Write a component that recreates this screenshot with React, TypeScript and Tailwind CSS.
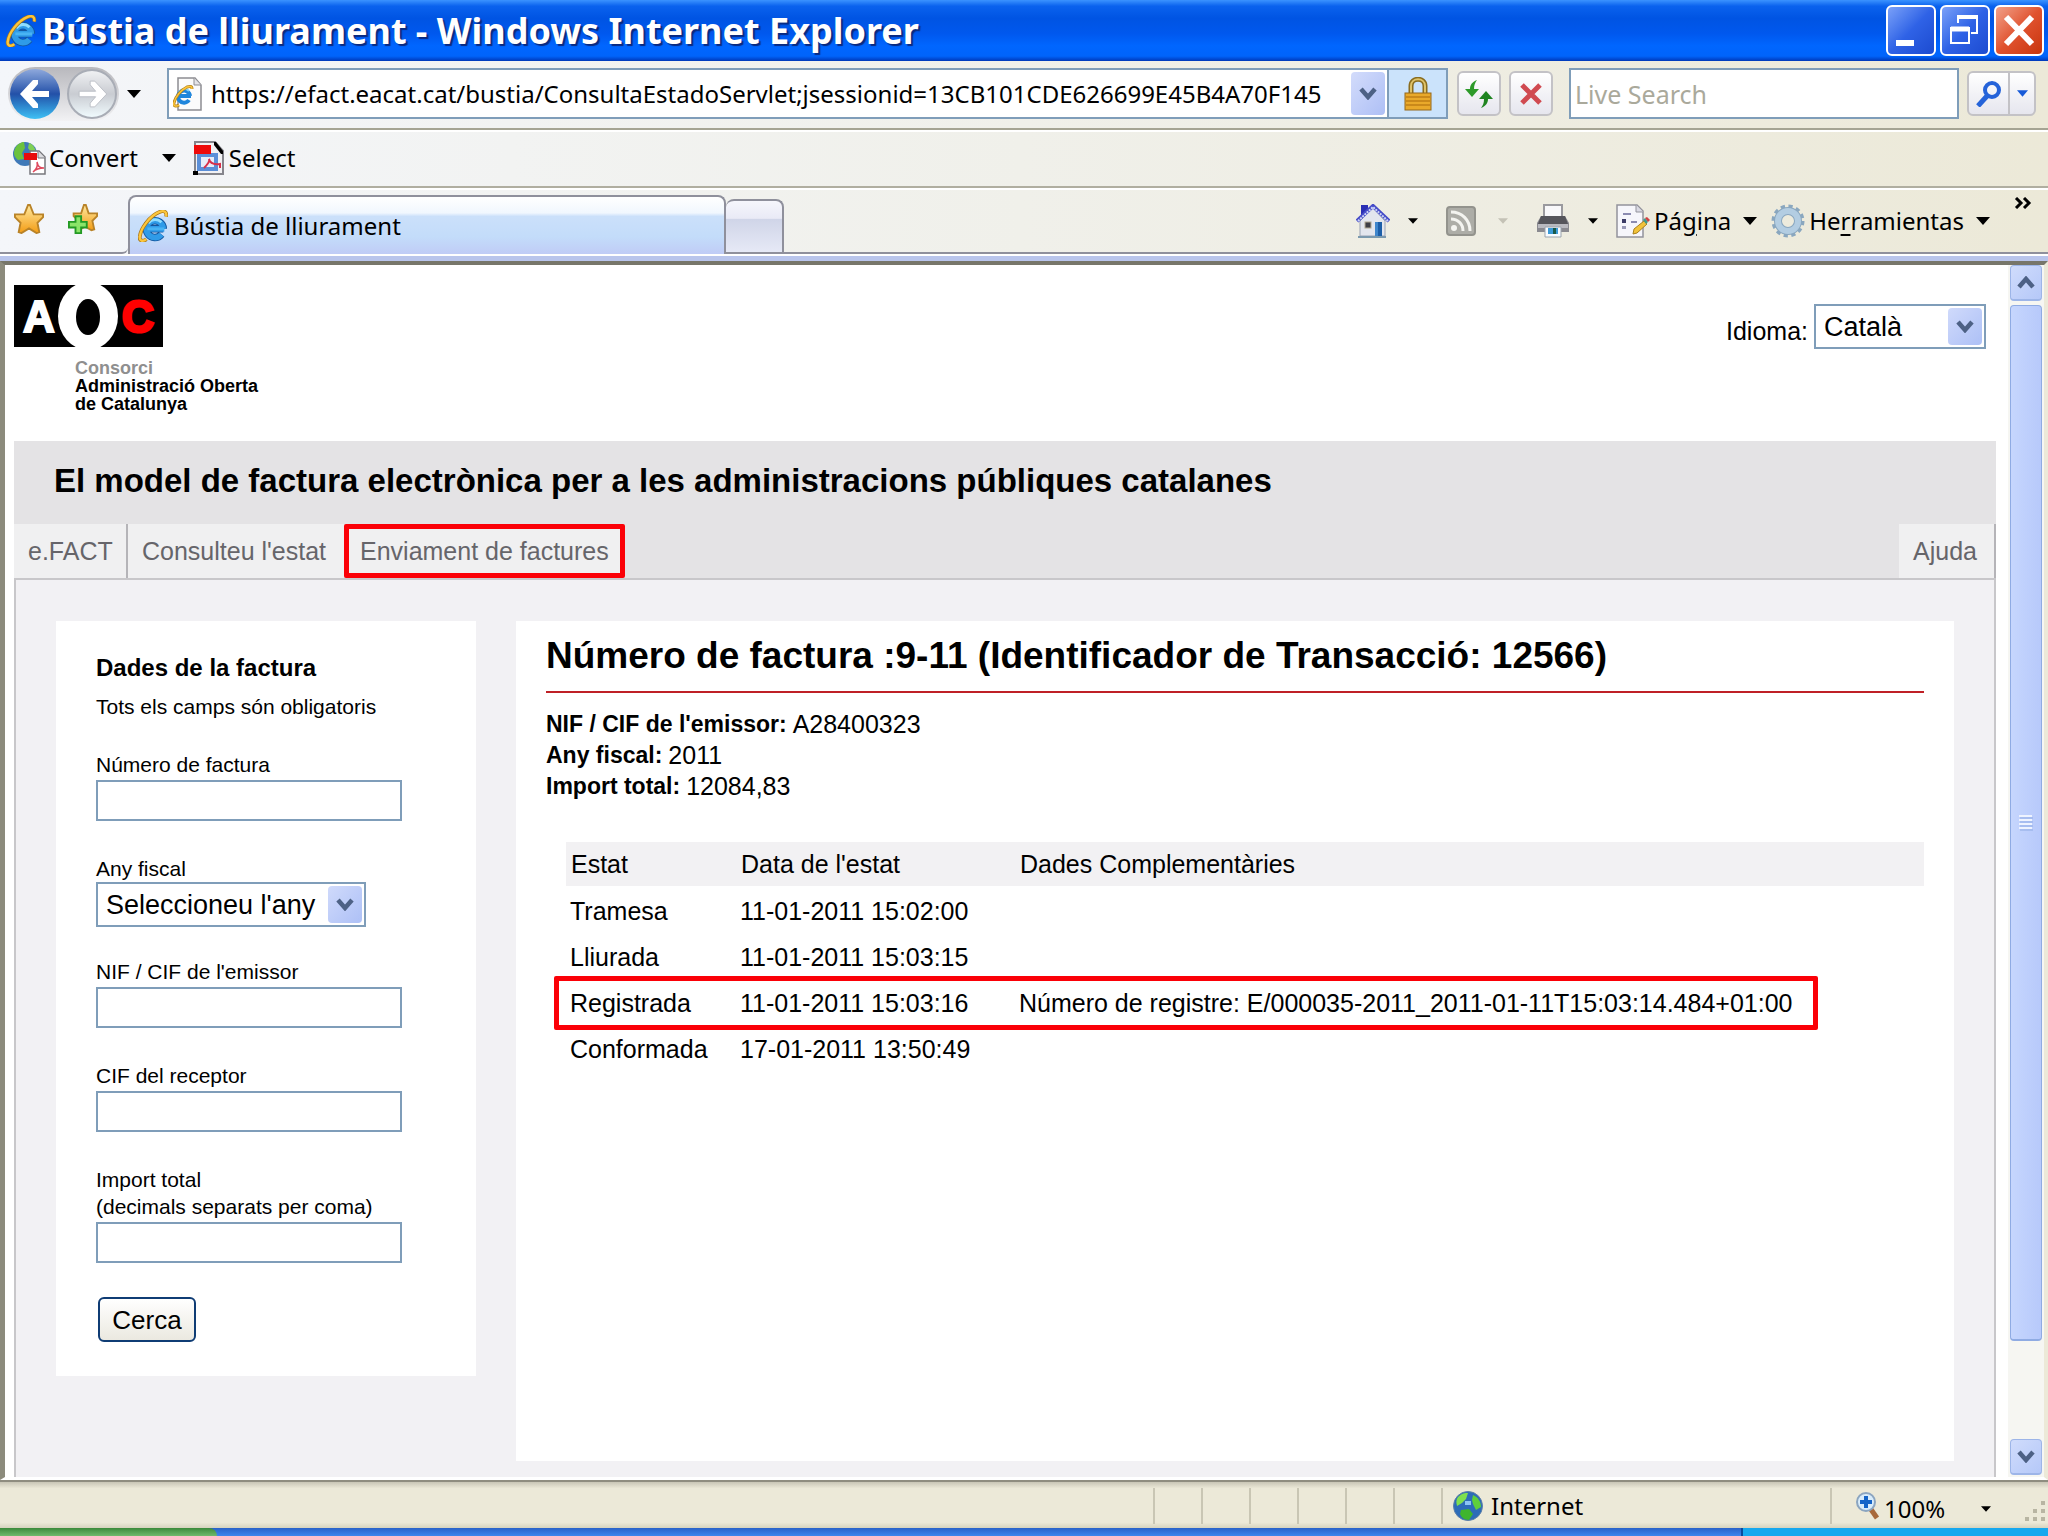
import React, { useState } from "react";

interface IconProps {
  className?: string;
}

type StateRow = {
  estat: string;
  data: string;
  dades?: string;
  marked?: boolean;
};

const rows: StateRow[] = [
  { estat: "Tramesa", data: "11-01-2011 15:02:00" },
  { estat: "Lliurada", data: "11-01-2011 15:03:15" },
  {
    estat: "Registrada",
    data: "11-01-2011 15:03:16",
    dades: "Número de registre: E/000035-2011_2011-01-11T15:03:14.484+01:00",
    marked: true,
  },
  { estat: "Conformada", data: "17-01-2011 13:50:49" },
];

const info: [string, string][] = [
  ["NIF / CIF de l'emissor:", "A28400323"],
  ["Any fiscal:", "2011"],
  ["Import total:", "12084,83"],
];

const IeIcon = ({ className }: IconProps) => (
  <svg viewBox="0 0 32 34" className={className} fill="none" aria-hidden="true">
    <path d="M27 20A9 9 0 1 0 25 26M10 20h17" stroke="#14579f" strokeWidth="8" />
    <path d="M27 20A9 9 0 1 0 25 26M10 20h18" stroke="#2f9be8" strokeWidth="6" />
    <path d="M11 14c4-5 10-5 14-1" stroke="#8fdcff" strokeWidth="3" />
    <path d="M10 20h18" stroke="#49b4f3" strokeWidth="3" />
    <path
      d="M9 31c-4 3-8 2-7-3C3 19 13 6 23 2c5-2 8 0 7 5"
      stroke="#a8761a"
      strokeWidth="4"
    />
    <path
      d="M9 31c-4 3-8 2-7-3C3 19 13 6 23 2c5-2 8 0 7 5"
      stroke="#fcc63c"
      strokeWidth="2.500"
    />
  </svg>
);

const PageIeIcon = ({ className }: IconProps) => (
  <svg viewBox="0 0 30 34" className={className} fill="none" aria-hidden="true">
    <path d="M5 1h17l6 7v25H5z" fill="#fbfbfb" stroke="#8d8d92" strokeWidth="1.500" />
    <path d="M21 1v7h7" fill="#e4e4e8" stroke="#8d8d92" />
    <path d="M17 19A6 6 0 1 0 16 23M6 19h12" stroke="#1f86dc" strokeWidth="4" />
    <path d="M6 15c3-4 7-4 10-1" stroke="#7fd0fa" strokeWidth="2" />
    <path d="M6 28c-3 2-6 1-5-2 1-6 7-13 13-16 3-1 5-1 5 2" stroke="#b5851f" strokeWidth="3" />
    <path d="M6 28c-3 2-6 1-5-2 1-6 7-13 13-16 3-1 5-1 5 2" stroke="#fcc63c" strokeWidth="1.500" />
  </svg>
);

const Caret = ({ className }: IconProps) => (
  <svg viewBox="0 0 14 8" className={className} aria-hidden="true">
    <path d="M0 0h14L7 8z" fill="currentColor" />
  </svg>
);

const Chevron = ({ className }: IconProps) => (
  <svg viewBox="0 0 18 13" className={className} aria-hidden="true">
    <path d="M2 2l7 8 7-8" fill="none" stroke="#4d6185" strokeWidth="4.500" />
  </svg>
);

const ConvertIcon = ({ className }: IconProps) => (
  <svg viewBox="0 0 34 34" className={className} aria-hidden="true">
    <circle cx="12" cy="13" r="12" fill="#3f79b8" />
    <path d="M2 8c2-5 6-7 9-7l1 6-3 5 2 6-6 1c-4-3-5-7-3-11z" fill="#6cc23e" />
    <path d="M16 2c4 1 6 5 7 9h-5l-3-4z" fill="#7fd054" />
    <path d="M17 10h9l6 6v17H17z" fill="#fff" stroke="#77777c" strokeWidth="1.500" />
    <path d="M25 10v7h7" fill="#dcdce0" stroke="#77777c" />
    <path d="M11 12h13v7H11z" fill="#e80c0c" />
    <path d="M20 31c4-3 5-6 4-10 1 5 3 6 7 6-5 0-8 1-11 4z" fill="none" stroke="#e0485c" strokeWidth="1.500" />
  </svg>
);

const SelectIcon = ({ className }: IconProps) => (
  <svg viewBox="0 0 32 34" className={className} aria-hidden="true">
    <path d="M2 1h20l8 9v23H2z" fill="#f1f1f4" stroke="#85858c" strokeWidth="2" />
    <path d="M21 1h2l7 9v3h-2l-7-9z" fill="#000" />
    <rect x="6" y="14" width="17" height="14" fill="#e6edf9" stroke="#5b8fd8" strokeWidth="4" />
    <path d="M1 4h17v9H1z" fill="#ee0a0a" />
    <path d="M11 27c4-4 6-7 5-9 1 4 4 6 11 5v4" fill="none" stroke="#d8304a" strokeWidth="2" />
    <path d="M0 30h5v4H0z" fill="#000" />
  </svg>
);

const Star = ({ className }: IconProps) => (
  <svg viewBox="0 0 32 32" className={className} aria-hidden="true">
    <defs>
      <linearGradient id="gold" x1="0" y1="0" x2="0" y2="1">
        <stop offset="0" stopColor="#ffe9a0" />
        <stop offset="1" stopColor="#f39c14" />
      </linearGradient>
    </defs>
    <path
      d="M15 1h2l4 10h10v3l-6 6 2 10-3 1-8-5-8 5-3-1 2-10-6-6v-3h10z"
      fill="url(#gold)"
      stroke="#b98328"
      strokeWidth="2"
    />
  </svg>
);

const AddStar = ({ className }: IconProps) => (
  <svg viewBox="0 0 32 32" className={className} aria-hidden="true">
    <path
      d="M17 1h2l3 9h9v3l-5 5 2 9-3 1-7-4-6 4-2-1 1-9-5-5v-3h8z"
      fill="url(#gold)"
      stroke="#b98328"
      strokeWidth="2"
    />
    <path
      d="M8 13h6v6h6v6h-6v6H8v-6H1v-6h7z"
      fill="#8be468"
      stroke="#239a24"
      strokeWidth="2"
    />
  </svg>
);

const HomeIcon = ({ className }: IconProps) => (
  <svg viewBox="0 0 34 34" className={className} aria-hidden="true">
    <path d="M5 1h7v11H5z" fill="#2a2fb4" />
    <path d="M4 17L17 4l12 13v15H4z" fill="#e3e6ee" stroke="#9aa3b4" />
    <path d="M1 17L17 2l16 15" fill="none" stroke="#454bc8" strokeWidth="4" />
    <path d="M2 17L17 3l15 14" fill="none" stroke="#ccd4f6" strokeWidth="2" strokeDasharray="2 1" />
    <rect x="9" y="18" width="6" height="6" fill="#3e3e46" stroke="#b1a892" />
    <rect x="19" y="18" width="7" height="14" fill="#1c5ea8" />
    <path d="M19 18h3v14h-3z" fill="#3f86cc" />
    <path d="M2 33h28" stroke="#7b99ae" strokeWidth="2" />
  </svg>
);

const RssIcon = ({ className }: IconProps) => (
  <svg viewBox="0 0 30 30" className={className} aria-hidden="true">
    <rect x="1" y="1" width="28" height="28" rx="3" fill="#adada7" stroke="#93938d" strokeWidth="2" />
    <circle cx="8" cy="22" r="3" fill="#f4f4f0" />
    <path d="M5 13c7 0 12 5 12 12M5 6c11 0 19 8 19 19" fill="none" stroke="#f4f4f0" strokeWidth="3" />
  </svg>
);

const PrinterIcon = ({ className }: IconProps) => (
  <svg viewBox="0 0 34 34" className={className} aria-hidden="true">
    <path d="M8 1h18v12H8z" fill="#f8f8fa" stroke="#9a9a9e" strokeWidth="2" />
    <path d="M5 12h24l4 7v9H1v-9z" fill="#8a8a90" />
    <path d="M5 12h24l3 8H2z" fill="#55555b" />
    <path d="M2 20h30v4H2z" fill="#b9b9bf" />
    <path d="M9 23h16v10H9z" fill="#f8fbff" stroke="#9aa3ad" />
    <path d="M12 24h10v6H12z" fill="#3c9ad6" />
    <path d="M17 24h3v6h-3z" fill="#1a5a4a" />
  </svg>
);

const PageIcon = ({ className }: IconProps) => (
  <svg viewBox="0 0 34 34" className={className} aria-hidden="true">
    <path d="M1 1h20l6 6v26H1z" fill="#f6f6fb" stroke="#93939c" strokeWidth="1.500" />
    <path d="M20 1v7h7" fill="#dadae4" stroke="#93939c" />
    <path d="M7 10h8M15 18h6" stroke="#8b8bb0" strokeWidth="2" />
    <path d="M6 15h4v4H6z" fill="#3c3c66" />
    <path d="M6 22h4v3H6z" fill="#9a9ab8" />
    <path d="M17 30l1-5 10-8 3 3-10 9z" fill="#f2c33a" stroke="#a8801c" />
    <path d="M27 16l2-2 3 4-2 2z" fill="#3f9a8c" />
    <path d="M29 14l2-1 3 3-2 2z" fill="#d04040" />
  </svg>
);

const GearIcon = ({ className }: IconProps) => (
  <svg viewBox="0 0 34 34" className={className} fill="none" aria-hidden="true">
    <circle cx="17" cy="17" r="14" stroke="#8aa7bf" strokeWidth="5" strokeDasharray="4 3.330" />
    <circle cx="17" cy="17" r="10" stroke="#8aa7bf" strokeWidth="8" />
    <circle cx="17" cy="17" r="10" stroke="#b3cde2" strokeWidth="6" />
  </svg>
);

const LockIcon = ({ className }: IconProps) => (
  <svg viewBox="0 0 28 34" className={className} aria-hidden="true">
    <path d="M7 17V9c0-9 14-9 14 0v8" fill="none" stroke="#8a6d1e" strokeWidth="5" />
    <path d="M7 17V9c0-9 14-9 14 0v8" fill="none" stroke="#dfc36a" strokeWidth="2" />
    <rect x="1" y="16" width="26" height="17" fill="#e9a92a" stroke="#96691a" />
    <path d="M2 20h24M2 24h24M2 28h24" stroke="#c07f16" strokeWidth="1.500" />
  </svg>
);

const GlobeIcon = ({ className }: IconProps) => (
  <svg viewBox="0 0 30 30" className={className} aria-hidden="true">
    <circle cx="15" cy="15" r="14.500" fill="#2d6cb8" stroke="#5d7fa8" />
    <path d="M5 6c4-4 7-4 10-4l-2 6-4 4-5 3c-1-4-1-6 1-9z" fill="#7fe04e" />
    <path d="M20 4c5 2 8 7 8 12l-5 3-3-6-1-4z" fill="#5fcf3c" />
    <path d="M8 19l8-1 4 5-4 6c-5 0-8-3-9-6z" fill="#3fb52e" />
    <path d="M12 10h6v4h-6z" fill="#8cc4f4" />
  </svg>
);

const AocLogo = ({ className }: IconProps) => (
  <svg viewBox="0 0 149 62" className={className} role="img" aria-label="AOC">
    <rect width="149" height="62" fill="#000" />
    <text x="9" y="47" fontFamily="Liberation Sans, sans-serif" fontWeight="700" fontSize="44" fill="#fff" stroke="#fff" strokeWidth="2">
      A
    </text>
    <ellipse cx="74" cy="31" rx="30" ry="34" fill="#fff" />
    <ellipse cx="74" cy="32" rx="12" ry="18" fill="#000" />
    <text x="108" y="47" fontFamily="Liberation Sans, sans-serif" fontWeight="700" fontSize="44" fill="#f00" stroke="#f00" strokeWidth="3">
      C
    </text>
  </svg>
);

const TitleBar = () => (
  <header className="flex h-[61px] shrink-0 items-center bg-[linear-gradient(180deg,#3b93ff_0%,#0a62ee_10%,#0054e3_30%,#0058ee_55%,#0066ff_75%,#0064fb_92%,#0038b8_100%)] pr-1 pl-[5px]">
    <IeIcon className="h-8 w-8 shrink-0" />
    <h1 className="ml-[5px] flex-1 font-['Noto_Sans',sans-serif] text-4xl leading-10 font-bold whitespace-nowrap text-white [text-shadow:2px_2px_1px_#0a2a80]">
      Bústia de lliurament - Windows Internet Explorer
    </h1>
    <div className="flex gap-1">
      <button
        aria-label="Minimize"
        className="h-[51px] w-[50px] rounded-md border-2 border-white bg-linear-to-br from-[#7ba0f8] via-[#2f62e6] to-[#1c4bd0]"
      >
        <svg viewBox="0 0 46 47" className="h-full w-full">
          <path d="M8 33h18v6H8z" fill="#fff" />
        </svg>
      </button>
      <button
        aria-label="Restore"
        className="h-[51px] w-[50px] rounded-md border-2 border-white bg-linear-to-br from-[#7ba0f8] via-[#2f62e6] to-[#1c4bd0]"
      >
        <svg viewBox="0 0 46 47" className="h-full w-full" fill="none" stroke="#fff" strokeWidth="2">
          <path d="M16 16V9h19v17h-6" />
          <path d="M16 10h19" strokeWidth="4" />
          <path d="M9 21h18v15H9z" />
          <path d="M9 22h18" strokeWidth="5" />
        </svg>
      </button>
      <button
        aria-label="Close"
        className="h-[51px] w-[50px] rounded-md border-2 border-white bg-linear-to-br from-[#f0a088] via-[#e0522e] to-[#c83408]"
      >
        <svg viewBox="0 0 46 47" className="h-full w-full">
          <path d="M10 10l26 27M36 10L10 37" stroke="#fff" strokeWidth="6" />
        </svg>
      </button>
    </div>
  </header>
);

const AddressBar = () => {
  const [url, setUrl] = useState(
    "https://efact.eacat.cat/bustia/ConsultaEstadoServlet;jsessionid=13CB101CDE626699E45B4A70F145"
  );
  return (
    <div className="flex h-[69px] shrink-0 items-center border-b-2 border-[#a5a493] pr-3 pb-[2px] pl-2">
      <div className="flex items-center rounded-full bg-linear-to-b from-[#b8b8bd] to-[#f2f2f4] p-[2px]">
        <button aria-label="Back" className="h-[50px] w-[50px] rounded-full bg-linear-to-b from-[#8fa9dc] via-[#2350a8] to-[#3fc1f5]">
          <svg viewBox="0 0 50 50" className="h-full w-full" fill="#fff">
            <path d="M10 25l13-14h5v4l-6 7h17v6H22l6 7v4h-5z" />
          </svg>
        </button>
        <button aria-label="Forward" className="ml-[7px] h-[50px] w-[50px] rounded-full border-2 border-[#a9adb6] bg-linear-to-b from-[#f0f1f3] via-[#c9ccd2] to-[#f0fafd]">
          <svg viewBox="0 0 50 50" className="h-full w-full" fill="#fff" stroke="#b9bcc4">
            <path d="M41 25L28 11h-5v4l6 7H11v6h18l-6 7v4h5z" />
          </svg>
        </button>
      </div>
      <button aria-label="Recent pages" className="ml-2">
        <Caret className="h-2 w-[14px]" />
      </button>
      <form className="ml-[26px] flex h-[51px] flex-1 items-center border-2 border-[#7f9db9] bg-white pl-1">
        <PageIeIcon className="h-[34px] w-[30px] shrink-0" />
        <input
          aria-label="Address"
          value={url}
          onChange={(e) => setUrl(e.target.value)}
          className="ml-2 h-full min-w-0 flex-1 text-2xl outline-none"
        />
        <button type="button" aria-label="Address history" className="flex h-[43px] w-[34px] shrink-0 items-center justify-center rounded-sm bg-linear-to-br from-[#d3dcfb] to-[#aebff5]">
          <Chevron className="h-[13px] w-[18px]" />
        </button>
        <button type="button" aria-label="Security report" className="ml-[2px] flex h-full w-[59px] shrink-0 items-center justify-center border-l-2 border-[#7f9db9] bg-[#cbe3fb]">
          <LockIcon className="h-[34px] w-7" />
        </button>
      </form>
      <button aria-label="Refresh" className="ml-[9px] flex h-[45px] w-11 items-center justify-center rounded-md border-2 border-[#c3c2c6] bg-linear-to-b from-white to-[#e6e6ee]">
        <svg viewBox="0 0 30 28" className="h-7 w-[30px]">
          <path d="M13 0C8 2 6 5 6 9H1l7 8 7-8h-5c0-4 1-6 3-9z" fill="#2d9a2a" />
          <path d="M17 28c5-2 7-5 7-9h5l-7-8-7 8h5c0 4-1 6-3 9z" fill="#1f8420" />
        </svg>
      </button>
      <button aria-label="Stop" className="ml-2 flex h-[45px] w-11 items-center justify-center rounded-md border-2 border-[#c3c2c6] bg-linear-to-b from-white to-[#e6e6ee]">
        <svg viewBox="0 0 22 22" className="h-[22px] w-[22px]">
          <path d="M2 2l18 18M20 2L2 20" stroke="#d04a50" strokeWidth="5" />
        </svg>
      </button>
      <input
        aria-label="Live Search"
        placeholder="Live Search"
        className="ml-4 h-[51px] w-[390px] border-2 border-[#7f9db9] bg-white pl-1 text-[25px] outline-none placeholder:text-[#aaa99b]"
      />
      <div className="ml-2 flex h-[45px] rounded-md border-2 border-[#c3c2c6] bg-linear-to-b from-white to-[#e6e6ee]">
        <button aria-label="Search" className="flex w-[41px] items-center justify-center border-r-2 border-[#c3c2c6]">
          <svg viewBox="0 0 26 26" className="h-[26px] w-[26px]" fill="none" stroke="#2563d9" strokeWidth="4">
            <circle cx="16" cy="9" r="7" />
            <path d="M11 15L2 25" strokeWidth="5" />
          </svg>
        </button>
        <button aria-label="Search options" className="flex w-6 items-center justify-center text-[#1659d8]">
          <Caret className="h-[7px] w-[11px]" />
        </button>
      </div>
    </div>
  );
};

const ConvertBar = () => (
  <div className="flex h-[58px] shrink-0 items-center border-t-2 border-b-2 border-t-white border-b-[#b0aea0] pb-[2px] pl-[13px]">
    <button className="flex items-center gap-[2px]">
      <ConvertIcon className="h-[34px] w-[34px]" />
      Convert
    </button>
    <button aria-label="Convert options" className="ml-6">
      <Caret className="h-2 w-[14px]" />
    </button>
    <button className="ml-[17px] flex items-center gap-1">
      <SelectIcon className="h-[34px] w-8" />
      Select
    </button>
  </div>
);

const TabBar = () => (
  <div className="flex h-[73px] shrink-0 flex-col border-t-2 border-white">
    <div className="flex flex-1">
      <div className="flex w-[128px] shrink-0 items-center gap-6 rounded-br-md border-b-2 border-[#8f909c] pb-[5px] pl-[14px]">
        <button aria-label="Favorites">
          <Star className="h-[30px] w-[30px]" />
        </button>
        <button aria-label="Add to favorites">
          <AddStar className="h-[30px] w-[30px]" />
        </button>
      </div>
      <button className="mt-[5px] flex w-[598px] items-center rounded-t-lg border-2 border-b-0 border-[#8f909c] bg-[linear-gradient(180deg,#ffffff_0%,#f1f7fe_28%,#cbe0fa_34%,#c3dcfa_70%,#c0ccf6_100%)] pl-2">
        <IeIcon className="h-8 w-[30px]" />
        <span className="ml-[6px]">Bústia de lliurament</span>
      </button>
      <div className="flex flex-1 items-center border-b-2 border-[#8f909c]">
        <button
          aria-label="New tab"
          className="mt-[9px] h-[53px] w-[58px] rounded-t-lg border-2 border-b-0 border-l-0 border-[#8f909c] bg-[linear-gradient(180deg,#f6f6fc_0%,#e9eaf6_34%,#d0d5e8_36%,#e6e9f6_100%)]"
        />
        <div className="ml-auto flex items-center pr-4">
          <button aria-label="Home">
            <HomeIcon className="h-[34px] w-[34px]" />
          </button>
          <Caret className="ml-[18px] h-[6px] w-[10px]" />
          <button aria-label="Feeds" className="ml-7">
            <RssIcon className="h-[30px] w-[30px]" />
          </button>
          <Caret className="ml-[22px] h-[6px] w-[10px] text-[#c4c2b6]" />
          <button aria-label="Print" className="ml-7">
            <PrinterIcon className="h-[34px] w-[34px]" />
          </button>
          <Caret className="ml-[18px] h-[6px] w-[10px]" />
          <button className="ml-[18px] flex items-center gap-1">
            <PageIcon className="h-[34px] w-[34px]" />
            <span>
              Pá<u className="underline-offset-4">g</u>ina
            </span>
            <Caret className="ml-2 h-2 w-[14px]" />
          </button>
          <button className="ml-[14px] flex items-center gap-1">
            <GearIcon className="h-[34px] w-[34px]" />
            <span>
              He<u className="underline-offset-4">r</u>ramientas
            </span>
            <Caret className="ml-2 h-2 w-[14px]" />
          </button>
          <button aria-label="More tools" className="mb-9 ml-6">
            <svg viewBox="0 0 18 12" className="h-3 w-[18px]" fill="none" stroke="#000" strokeWidth="3">
              <path d="M2 1l5 5-5 5M10 1l5 5-5 5" />
            </svg>
          </button>
        </div>
      </div>
    </div>
    <div className="h-[7px] border-t-2 border-white bg-[#b9c5ec]" />
  </div>
);

interface FieldProps {
  id: string;
  label: React.ReactNode;
}

const Field = ({ id, label }: FieldProps) => (
  <div className="pb-[34px]">
    <label htmlFor={id} className="block leading-[27px]">
      {label}
    </label>
    <input
      id={id}
      type="text"
      className="mt-[2px] block h-[41px] w-[306px] border-2 border-[#7f9db9] bg-white px-1 outline-none"
    />
  </div>
);

interface DropdownProps {
  id: string;
  option: string;
  className: string;
}

const Dropdown = ({ id, option, className }: DropdownProps) => (
  <div className="relative w-fit">
    <select
      id={id}
      className={
        "block h-[45px] appearance-none border-2 border-[#7f9db9] bg-white pl-2 text-[27px] leading-8 outline-none " +
        className
      }
    >
      <option>{option}</option>
    </select>
    <span className="pointer-events-none absolute top-1 right-1 flex h-[37px] w-[34px] items-center justify-center rounded-sm bg-linear-to-br from-[#d0dafb] to-[#adc0f6]">
      <Chevron className="h-[13px] w-[18px]" />
    </span>
  </div>
);

const SearchForm = () => (
  <form className="w-[420px] shrink-0 self-start bg-white pt-[31px] pb-[34px] pl-10 text-[21px]">
    <h3 className="text-2xl leading-8 font-bold">Dades de la factura</h3>
    <p className="mt-[7px] mb-7 leading-8">Tots els camps són obligatoris</p>
    <Field id="numero" label="Número de factura" />
    <div className="pb-[31px]">
      <label htmlFor="any" className="block leading-[27px]">
        Any fiscal
      </label>
      <Dropdown id="any" option="Seleccioneu l'any" className="w-[270px]" />
    </div>
    <Field id="nif" label="NIF / CIF de l'emissor" />
    <Field id="cif" label="CIF del receptor" />
    <Field
      id="import"
      label={
        <>
          Import total
          <br />
          (decimals separats per coma)
        </>
      }
    />
    <button
      type="button"
      className="ml-[2px] h-[45px] w-[98px] rounded-md border-2 border-[#0f3c74] bg-linear-to-b from-white to-[#ebe9e0] text-[26px] leading-8"
    >
      Cerca
    </button>
  </form>
);

const Detail = () => (
  <section className="min-w-0 flex-1 bg-white px-[30px] pt-[13px]">
    <h2 className="border-b-2 border-[#bf2026] pb-[13px] text-[37px] leading-11 font-bold">
      Número de factura :9-11 (Identificador de Transacció: 12566)
    </h2>
    <dl className="mt-4 text-[25px] leading-[31px]">
      {info.map((item) => (
        <div key={item[0]} className="flex gap-[6px]">
          <dt className="text-[23px] font-bold">{item[0]}</dt>
          <dd>{item[1]}</dd>
        </div>
      ))}
    </dl>
    <div className="mt-10 pl-5">
      <table className="w-full border-separate border-spacing-0 text-left text-[25px] leading-8">
        <thead>
          <tr className="h-[46px]">
            <th className="w-[170px] border-b-2 border-white bg-[#f2f1f3] bg-clip-padding pl-[5px] font-normal">Estat</th>
            <th className="w-[279px] border-b-2 border-white bg-[#f2f1f3] bg-clip-padding pl-[5px] font-normal">Data de l'estat</th>
            <th className="border-b-2 border-white bg-[#f2f1f3] bg-clip-padding pl-[5px] font-normal">Dades Complementàries</th>
          </tr>
        </thead>
        <tbody>
          {rows.map((row) => (
            <tr key={row.estat} className="relative h-[46px]">
              <td className="pl-1">
                {row.marked && (
                  <span className="absolute -top-1 right-[106px] -bottom-1 -left-3 rounded-xs border-5 border-[#fb0007]" />
                )}
                {row.estat}
              </td>
              <td className="pl-1">{row.data}</td>
              <td className="pl-1">{row.dades}</td>
            </tr>
          ))}
        </tbody>
      </table>
    </div>
  </section>
);

const Page = () => (
  <main className="flex min-w-0 flex-1 flex-col pr-3 pl-[9px] font-['Liberation_Sans',Arial,sans-serif]">
    <div className="flex h-44 shrink-0 items-start justify-between pt-5 pr-[10px]">
      <div>
        <AocLogo className="h-[62px] w-[149px]" />
        <p className="mt-3 ml-[61px] text-lg leading-[18px] font-bold">
          <span className="text-[#8f8f8f]">Consorci</span>
          <br />
          Administració Oberta
          <br />
          de Catalunya
        </p>
      </div>
      <div className="mt-[19px] flex items-end gap-[6px]">
        <label htmlFor="idioma" className="text-[25px] leading-9">
          Idioma:
        </label>
        <Dropdown id="idioma" option="Català" className="w-[172px]" />
      </div>
    </div>
    <div className="shrink-0 bg-[#e4e3e5]">
      <h2 className="pt-[18px] pb-[22px] pl-10 text-[33px] leading-[43px] font-bold">
        El model de factura electrònica per a les administracions públiques catalanes
      </h2>
      <nav className="flex h-14 border-b-2 border-[#c8c7ca] text-[25px] leading-[54px] text-[#66656a]">
        <a href="#efact" className="w-[114px] border-r-2 border-[#b5b4b8] bg-[#f0f0f1] pl-[14px]">
          e.FACT
        </a>
        <a href="#estat" className="w-[216px] bg-[#f0f0f1] pl-[14px]">
          Consulteu l'estat
        </a>
        <a href="#enviament" className="rounded-xs border-5 border-[#fb0007] bg-[#f0f0f1] px-[11px] leading-11">
          Enviament de factures
        </a>
        <a href="#ajuda" className="ml-auto border-r-2 border-[#b5b4b8] bg-[#f0f0f1] pr-[17px] pl-[14px]">
          Ajuda
        </a>
      </nav>
    </div>
    <div className="flex flex-1 gap-10 border-x-2 border-[#c8c7ca] bg-[#f2f1f4] pt-[41px] pr-10 pb-4 pl-10">
      <SearchForm />
      <Detail />
    </div>
  </main>
);

const ScrollBar = () => (
  <div className="flex w-9 shrink-0 flex-col gap-1 bg-[#f6f6f2] pb-[2px]">
    <button aria-label="Scroll up" className="mx-[2px] flex h-9 items-center justify-center rounded-sm border border-b-2 border-[#9db5e8] bg-linear-to-br from-[#d0dcfc] to-[#b5c8f8]">
      <Chevron className="h-[13px] w-[18px] rotate-180" />
    </button>
    <div className="mx-[2px] flex flex-[23] items-center justify-center rounded-sm border border-b-2 border-[#8fabe3] bg-linear-to-r from-[#c6d6fd] to-[#b7c9fb]">
      <svg viewBox="0 0 14 16" className="h-4 w-[14px]">
        <path d="M0 1h13M0 5h13M0 9h13M0 13h13" stroke="#eef3ff" strokeWidth="2" />
        <path d="M1 3h13M1 7h13M1 11h13M1 15h13" stroke="#8fabe3" />
      </svg>
    </div>
    <div className="flex-[2]" />
    <button aria-label="Scroll down" className="mx-[2px] flex h-9 items-center justify-center rounded-sm border border-b-2 border-[#9db5e8] bg-linear-to-br from-[#d0dcfc] to-[#b5c8f8]">
      <Chevron className="h-[13px] w-[18px]" />
    </button>
  </div>
);

const StatusBar = () => (
  <footer className="flex h-12 shrink-0 justify-end border-t-2 border-[#8f8d80] bg-[linear-gradient(180deg,#c9c6b6_0%,#ece9d8_14%,#ece9d8_88%,#d6d3be_100%)] pt-[6px] pb-1">
    {[0, 1, 2, 3, 4, 5].map((n) => (
      <div key={n} className="w-12 border-l-2 border-[#c9c6b4]" />
    ))}
    <div className="flex w-[389px] items-center border-l-2 border-[#c9c6b4] pl-[10px]">
      <GlobeIcon className="h-[30px] w-[30px]" />
      <span className="ml-2">Internet</span>
    </div>
    <div className="flex w-[218px] items-center border-l-2 border-[#c9c6b4] pl-6">
      <svg viewBox="0 0 24 28" className="h-7 w-6" aria-hidden="true">
        <path d="M14 16l7 10" stroke="#a8693a" strokeWidth="5" />
        <circle cx="10" cy="10" r="9" fill="#d8ecfb" stroke="#8ba5c0" strokeWidth="2" />
        <path d="M10 4v12M4 10h12" stroke="#1464c8" strokeWidth="4" />
      </svg>
      <button className="ml-1 flex items-center gap-9 pt-[6px]">
        100%
        <Caret className="h-[6px] w-[10px]" />
      </button>
      <svg viewBox="0 0 24 24" className="mt-auto ml-auto h-6 w-6" fill="#b8b5a2" aria-hidden="true">
        <path d="M17 1h4v4h-4zM9 9h4v4H9zM17 9h4v4h-4zM1 17h4v4H1zM9 17h4v4H9zM17 17h4v4h-4z" />
      </svg>
    </div>
  </footer>
);

export default function App() {
  return (
    <div className="flex h-screen min-h-fit flex-col bg-linear-to-r from-[#f4f6fa] via-[#f0f0ea] to-[#ece9d8] font-['Noto_Sans',sans-serif] text-2xl leading-8 text-black">
      <TitleBar />
      <AddressBar />
      <ConvertBar />
      <TabBar />
      <div className="flex flex-1 border-t-4 border-r-4 border-b-3 border-l-5 border-t-[#77766a] border-r-[#ece9d8] border-b-white border-l-[#8c8b7c] bg-white">
        <Page />
        <ScrollBar />
      </div>
      <StatusBar />
      <div className="flex h-2 shrink-0 bg-linear-to-b from-[#2a62c8] to-[#3d86ee]">
        <div className="w-[217px] rounded-tr-lg bg-linear-to-b from-[#3b8a3b] to-[#6fba6c]" />
        <div className="ml-auto w-[15%] border-l-2 border-[#0a4a9c] bg-[#17a8ee]" />
      </div>
    </div>
  );
}
